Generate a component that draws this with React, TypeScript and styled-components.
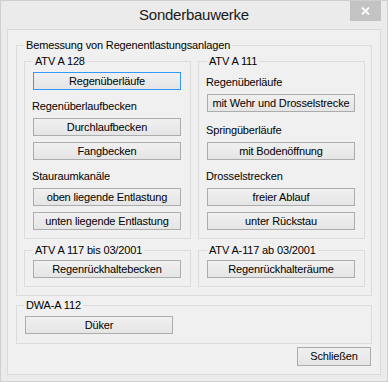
import React from "react";
import styled, { createGlobalStyle } from "styled-components";

const Global = createGlobalStyle`
  html, body { margin: 0; padding: 0; background: #ebebeb; }
  * { box-sizing: border-box; }
`;

const UI_FONT = `"Liberation Sans", Arial, sans-serif`;

const Window = styled.div`
  width: 388px;
  height: 382px;
  display: flex;
  flex-direction: column;
  background: #ebebeb;
  border: 1px solid #cfcfcf;
  font-family: ${UI_FONT};
  color: #000;
`;

const TitleBar = styled.div`
  height: 28px;
  display: grid;
  grid-template-columns: 1fr auto 1fr;
  align-items: start;
`;

const Title = styled.div`
  grid-column: 2;
  font-size: 15px;
  letter-spacing: -0.25px;
  line-height: 28px;
  color: #1a1a1a;
`;

const CloseButton = styled.div`
  grid-column: 3;
  justify-self: end;
  width: 31px;
  height: 20px;
  margin-right: 6px;
  background: #c3c3c3;
  display: flex;
  align-items: center;
  justify-content: center;
`;

const Client = styled.div`
  flex: 1;
  margin: 0 6px 6px;
  border: 1px solid #dadada;
  background: #f0f0f0;
  display: flex;
  flex-direction: column;
`;

const Group = styled.fieldset<{ $m?: string }>`
  margin: ${(p) => p.$m ?? "0"};
  padding: 0;
  min-inline-size: 0;
  border: 1px solid #dcdcdc;
`;

const Legend = styled.legend<{ $left: number }>`
  margin-left: ${(p) => p.$left}px;
  padding: 0 2px;
  font-size: 11px;
  letter-spacing: -0.15px;
  line-height: 15px;
`;

const GroupRow = styled.div<{ $mt: number; $pb: number }>`
  display: grid;
  grid-template-columns: 167px 167px;
  column-gap: 7px;
  padding: 0 6px ${(p) => p.$pb}px 7px;
  margin-top: ${(p) => p.$mt}px;
`;

const Stack = styled.div<{ $pt: number; $pb: number }>`
  display: flex;
  flex-direction: column;
  align-items: flex-start;
  padding: ${(p) => p.$pt}px 9px ${(p) => p.$pb}px 8px;
`;

const Label = styled.div<{ $mt?: number }>`
  margin-top: ${(p) => p.$mt ?? 0}px;
  margin-left: -1px;
  font-size: 11px;
  letter-spacing: -0.15px;
  line-height: 15px;
  white-space: nowrap;
`;

const Button = styled.div<{ $mt?: number; $focused?: boolean; $w?: number; $h?: number }>`
  margin-top: ${(p) => p.$mt ?? 0}px;
  width: ${(p) => p.$w ?? 148}px;
  height: ${(p) => p.$h ?? 18}px;
  border: 1px solid ${(p) => (p.$focused ? "#3399ff" : "#acacac")};
  background: linear-gradient(#f0f0f0, #e5e5e5);
  font-size: 11px;
  letter-spacing: -0.15px;
  line-height: ${(p) => (p.$h ?? 18) - 2}px;
  text-align: center;
  white-space: nowrap;
`;

const Footer = styled.div`
  display: flex;
  justify-content: flex-end;
  margin-top: 3px;
  padding-right: 9px;
`;

export default function App() {
  return (
    <>
      <Global />
      <Window>
        <TitleBar>
          <Title>Sonderbauwerke</Title>
          <CloseButton>
            <svg width="9" height="8" viewBox="0 0 9 8">
              <path d="M1 0.5 L8 7.5 M8 0.5 L1 7.5" stroke="#fff" strokeWidth="1.8" />
            </svg>
          </CloseButton>
        </TitleBar>
        <Client>
          <Group $m="8px 8px 0">
            <Legend $left={7}>Bemessung von Regenentlastungsanlagen</Legend>
            <GroupRow $mt={1} $pb={0}>
              <Group>
                <Legend $left={8}>ATV A 128</Legend>
                <Stack $pt={3} $pb={8}>
                  <Button $focused>Regenüberläufe</Button>
                  <Label $mt={9}>Regenüberlaufbecken</Label>
                  <Button $mt={4}>Durchlaufbecken</Button>
                  <Button $mt={6}>Fangbecken</Button>
                  <Label $mt={9}>Stauraumkanäle</Label>
                  <Button $mt={4}>oben liegende Entlastung</Button>
                  <Button $mt={6}>unten liegende Entlastung</Button>
                </Stack>
              </Group>
              <Group>
                <Legend $left={8}>ATV A 111</Legend>
                <Stack $pt={6} $pb={8}>
                  <Label>Regenüberläufe</Label>
                  <Button $mt={4}>mit Wehr und Drosselstrecke</Button>
                  <Label $mt={11}>Springüberläufe</Label>
                  <Button $mt={4}>mit Bodenöffnung</Button>
                  <Label $mt={9}>Drosselstrecken</Label>
                  <Button $mt={4}>freier Ablauf</Button>
                  <Button $mt={6}>unter Rückstau</Button>
                </Stack>
              </Group>
            </GroupRow>
            <GroupRow $mt={4} $pb={8}>
              <Group>
                <Legend $left={8}>ATV A 117 bis 03/2001</Legend>
                <Stack $pt={2} $pb={8}>
                  <Button>Regenrückhaltebecken</Button>
                </Stack>
              </Group>
              <Group>
                <Legend $left={8}>ATV A-117 ab 03/2001</Legend>
                <Stack $pt={2} $pb={8}>
                  <Button>Regenrückhalteräume</Button>
                </Stack>
              </Group>
            </GroupRow>
          </Group>
          <Group $m="2px 8px 0">
            <Legend $left={7}>DWA-A 112</Legend>
            <Stack $pt={3} $pb={9}>
              <Button>Düker</Button>
            </Stack>
          </Group>
          <Footer>
            <Button $w={74} $h={19}>Schließen</Button>
          </Footer>
        </Client>
      </Window>
    </>
  );
}
